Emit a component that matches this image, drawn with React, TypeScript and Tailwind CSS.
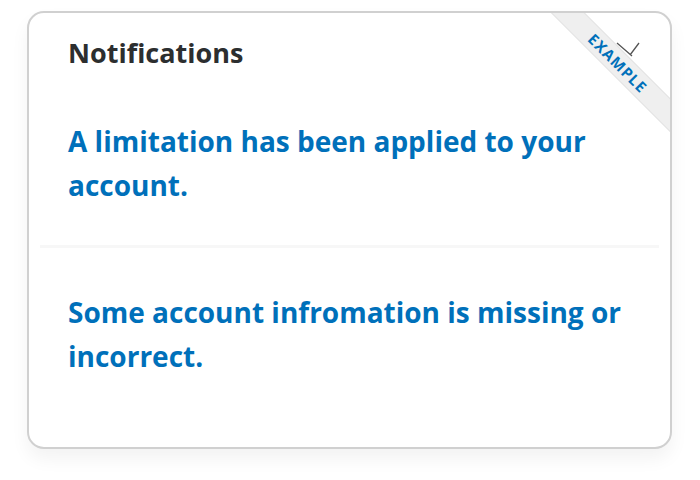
const items = [
  "A limitation has been applied to your account.",
  "Some account infromation is missing or incorrect.",
];

export default function App() {
  return (
    <div className="min-h-[480px] w-[700px] bg-white pl-[27px] pt-[11px]" style={{ fontFamily: '"Open Sans", "Noto Sans", sans-serif' }}>
      <div className="relative h-[438px] w-[645px] overflow-hidden rounded-[17px] border-2 border-[#d0d0d0] bg-white shadow-[0_10px_18px_rgba(0,0,0,0.05)]">
        {/* corner ribbon */}
        <div className="absolute left-[489px] top-[38px] flex h-[24px] w-[200px] rotate-45 items-center justify-center border-y border-[#e4e4e4] bg-[#efefef]">
          <span className="text-[15px] font-bold uppercase leading-none tracking-[1px] text-[#0070ba]">Example</span>
        </div>
        <svg className="absolute left-[586px] top-[28px]" width="28" height="20" viewBox="0 0 28 20">
          <path d="M2 2 L17 15 M15 14 L24 2" stroke="#555" strokeWidth="1.3" fill="none" />
        </svg>

        <div className="pl-[39px] pt-[20px]">
          <h2 className="text-[27px] font-bold leading-[40px] text-[#2c2e2f]">Notifications</h2>
        </div>
        <div className="px-[10px] pt-[46px]">
          {items.map((t, i) => (
            <div key={t}>
              {i > 0 && <div className="mx-[1px] mb-[42px] mt-[38px] h-[3px] bg-[#f7f7f7]" />}
              <a href="#" className="block pl-[29px] pr-[10px] text-[28px] font-bold leading-[44px] text-[#0070ba]">
                {t}
              </a>
            </div>
          ))}
        </div>
      </div>
    </div>
  );
}
